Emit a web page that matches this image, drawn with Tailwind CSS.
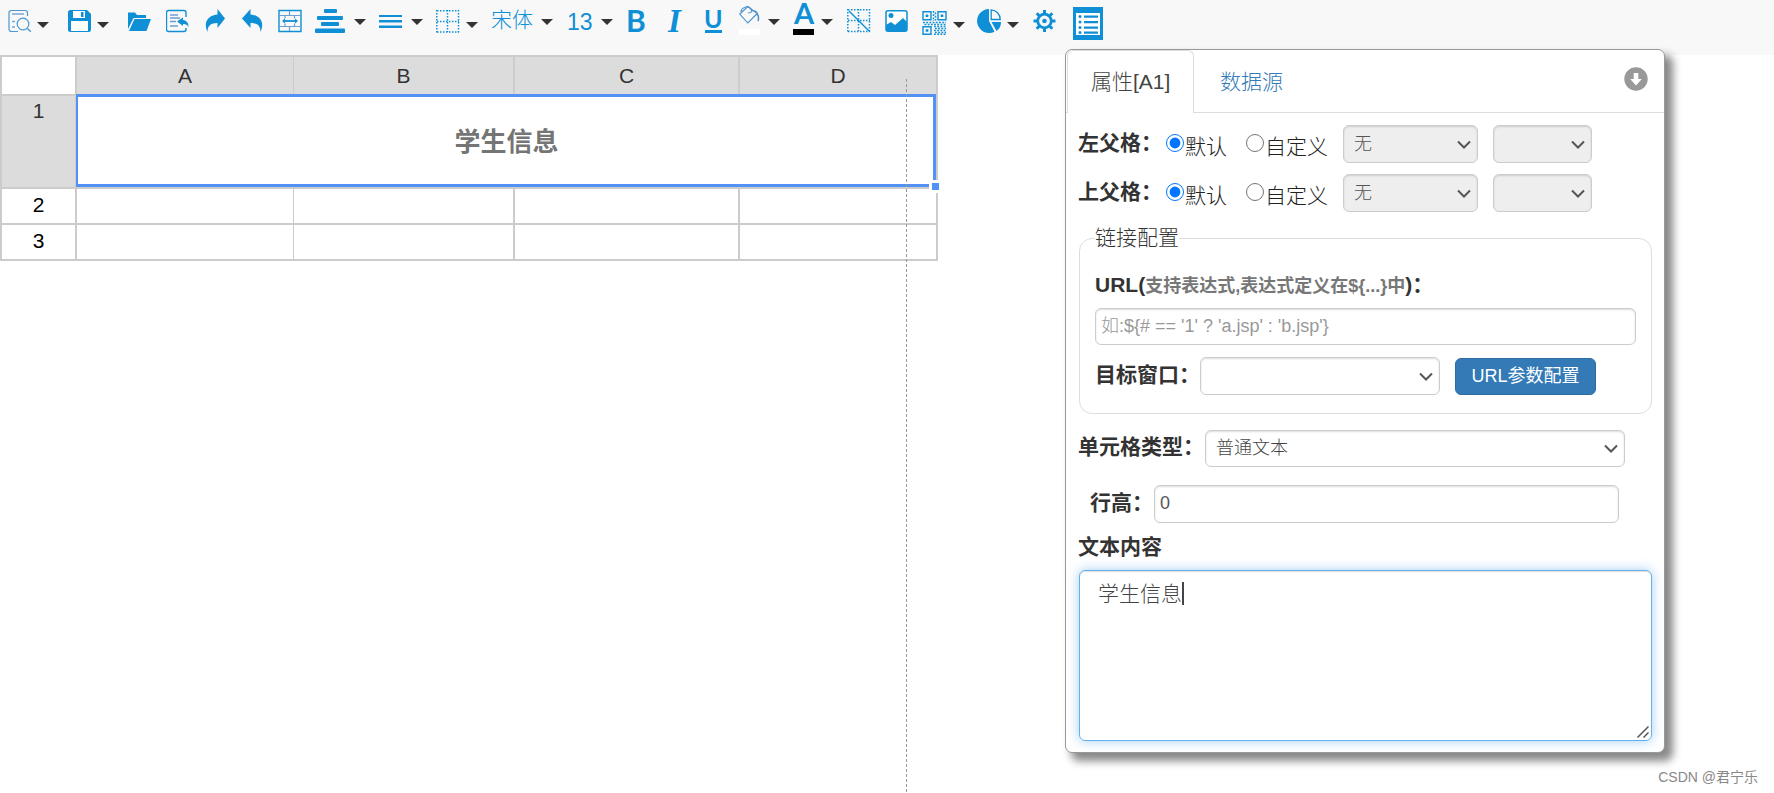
<!DOCTYPE html>
<html lang="zh-CN">
<head>
<meta charset="utf-8">
<title>报表设计器</title>
<script src="https://cdn.jsdelivr.net/npm/@tailwindcss/browser@4"></script>
</head>
<body class="relative flex min-h-screen flex-col bg-white font-['Liberation_Sans','Noto_Sans_CJK_SC',sans-serif] text-[21px] text-[#333]">

<svg class="hidden" aria-hidden="true">
  <symbol id="caret" viewBox="0 0 12 6"><path d="M0 0h12L6 6z" fill="#333"/></symbol>
  <symbol id="chev" viewBox="0 0 14 9"><path d="M1 1.500 7 7.500l6-6" fill="none" stroke="#555" stroke-width="2"/></symbol>
</svg>

<header class="flex h-[55px] items-start bg-[#f8f8f8] pl-2 text-[#0f8fd5]">
  <button aria-label="预览"><svg class="h-[42px] w-[42px]" viewBox="0 0 42 42" fill="none" stroke="currentColor"><path d="M10 31.500H3.500a2.500 2.500 0 0 1-2.500-2.500V13a2.500 2.500 0 0 1 2.500-2.500H17a2.500 2.500 0 0 1 2.500 2.500v3" stroke="#4a97d2" stroke-width="1.200"/><path d="M4 14h12M4 21.500h3M4 27h3" stroke="#7aa7d6" stroke-width="1.400"/><circle cx="15" cy="24" r="5.800" stroke="#4a97d2" stroke-width="1.200"/><path d="m19.500 28.500 3.300 3.300" stroke="#4a97d2" stroke-width="1.400"/><use href="#caret" x="29" y="22" width="12" height="6" stroke="none"/></svg></button>
  <button class="ml-[18px]" aria-label="保存"><svg class="h-[42px] w-[42px]" viewBox="0 0 42 42"><path d="M2.500 10H19l4 4v15.500a2.500 2.500 0 0 1-2.500 2.500h-18A2.500 2.500 0 0 1 0 29.500v-17A2.500 2.500 0 0 1 2.500 10z" fill="currentColor"/><path d="M5 11h12v7H5zM3 21h17v10H3z" fill="#fff"/><path d="M13 12h2.500v5H13z" fill="currentColor"/><use href="#caret" x="29" y="22" width="12" height="6"/></svg></button>
  <button class="ml-[18px]" aria-label="打开"><svg class="h-[42px] w-6" viewBox="0 0 24 42" fill="currentColor"><path d="M0 29V12.500h7l2 2.500h9v3H5.500z"/><path d="M6.500 19H23l-4.500 12H1z"/></svg></button>
  <button class="ml-[14px]" aria-label="导入"><svg class="h-[42px] w-6" viewBox="0 0 24 42" fill="none" stroke="currentColor"><path d="M20 17v-4.500a2 2 0 0 0-2-2H2.500a2 2 0 0 0-2 2v17a2 2 0 0 0 2 2H18a2 2 0 0 0 2-2V28" stroke-width="1.400"/><path d="M4 15h8M4 18h10M4 21.500h6M4 26h8" stroke="#6c9fd3" stroke-width="1.300"/><path d="m11 21.500 6-4v2.500c4 .5 5.500 3 5.500 7-1.500-2.500-3-3.200-5.500-3v2z" fill="currentColor" stroke="none"/></svg></button>
  <button class="ml-[15px]" aria-label="重做"><svg class="h-[42px] w-[22px]" viewBox="0 0 22 42" fill="currentColor"><path d="M20 18.500 12.500 9v5.500C4.500 15-2.500 21 2.500 32c0-6 3-9 10-9v5z"/></svg></button>
  <button class="ml-[15px]" aria-label="撤销"><svg class="h-[42px] w-[22px]" viewBox="0 0 22 42" fill="currentColor"><path d="M0 18.500 8.500 9v5.500C16.500 15 23.500 21 18.500 32c0-6-3-9-10-9v5z"/></svg></button>
  <button class="ml-[14px]" aria-label="合并单元格"><svg class="h-[42px] w-6" viewBox="0 0 24 42" fill="none" stroke="currentColor"><path d="M1 10.500h22v21H1z" stroke-width="1.400"/><path d="M1 15.500h22M1 26.500h22M11.500 11v4.500M11.500 26.500V31M7 15.500v3M16.500 15.500v3M7 23.500v3M16.500 23.500v3" stroke="#6c9fd3" stroke-width="1.200"/><path d="M5 21h14" stroke-width="1.800"/><path d="m4 21 3-2.500v5zM20 21l-3-2.500v5z" fill="currentColor" stroke="none"/></svg></button>
  <button class="ml-[13px]" aria-label="水平对齐"><svg class="h-[42px] w-[51px]" viewBox="0 0 51 42" fill="currentColor"><rect x="9" y="9" width="13" height="4" rx="1"/><rect x="2" y="16" width="26" height="4" rx="1"/><rect x="6" y="22" width="18" height="4" rx="1"/><rect x="0" y="28.500" width="30" height="4.500" rx="1"/><use href="#caret" x="39" y="19" width="12" height="6"/></svg></button>
  <button class="ml-[13px]" aria-label="垂直对齐"><svg class="h-[42px] w-11" viewBox="0 0 44 42" fill="currentColor"><path d="M0 15h23v2H0zM0 20h23v2.500H0zM0 25.500h23V28H0z"/><use href="#caret" x="32" y="19" width="12" height="6"/></svg></button>
  <button class="ml-[13px]" aria-label="边框"><svg class="h-[42px] w-[42px]" viewBox="0 0 42 42" fill="none" stroke="currentColor" stroke-width="1.500" stroke-dasharray="1.500 1.500"><path d="M1 10.800h22M1 32h22M.8 10v22.500M22.500 10v22.500M11.500 10v22M1 21.500h22"/><use href="#caret" x="30" y="22" width="12" height="6" stroke="none"/></svg></button>
  <button class="ml-[13px] flex h-[42px] w-[62px] items-start gap-2 text-[21px] leading-10 font-light">宋体<svg class="mt-[19px] h-[6px] w-3 shrink-0"><use href="#caret"/></svg></button>
  <button class="ml-[14px] flex h-[42px] w-[47px] items-start gap-2 text-[23px] leading-[44px]">13<svg class="mt-[19px] h-[6px] w-3 shrink-0"><use href="#caret"/></svg></button>
  <button class="ml-[13px]" aria-label="加粗"><svg class="h-[42px] w-6 overflow-visible" viewBox="0 0 24 42" fill="currentColor"><text x="-1" y="32" class="font-['Lato'] text-[30px] font-bold">B</text></svg></button>
  <button class="ml-[17px]" aria-label="斜体"><svg class="h-[42px] w-5 overflow-visible" viewBox="0 0 20 42" fill="currentColor"><text x="0" y="32" class="font-['Liberation_Serif'] text-[33px] font-bold italic">I</text></svg></button>
  <button class="ml-[17px]" aria-label="下划线"><svg class="h-[42px] w-5 overflow-visible" viewBox="0 0 20 42" fill="currentColor"><text x="-1" y="28" class="font-['Lato'] text-[25px] font-bold">U</text><path d="M0 30h17v3H0z"/></svg></button>
  <button class="ml-[14px]" aria-label="填充颜色"><svg class="h-[42px] w-[42px]" viewBox="0 0 42 42" fill="none" stroke="#4a90cf"><path d="m.8 14 8-7.500 9.500 7-9.500 9.500z" stroke-width="1.100"/><path d="M2 12c0-4 6-7 9-4s2 5-2 5M13.500 11c4-1 6.500 3 6 10" stroke-width="1.100"/><path d="M17.500 14c2 1 2.500 4 1.500 7" stroke-width="1.300"/><path d="M0 29h21v6H0z" fill="#fff" stroke="none"/><use href="#caret" x="29" y="19" width="12" height="6" stroke="none"/></svg></button>
  <button class="ml-[12px]" aria-label="字体颜色"><svg class="h-[42px] w-[42px] overflow-visible" viewBox="0 0 42 42" fill="currentColor"><text x="1" y="24" class="font-['Lato'] text-[29px] font-bold">A</text><path d="M0 29h21v6H0z" fill="#000"/><use href="#caret" x="28" y="19" width="12" height="6"/></svg></button>
  <button class="ml-[12px]" aria-label="斜线表头"><svg class="h-[42px] w-6" viewBox="0 0 24 42" fill="none" stroke="currentColor" stroke-width="1.500"><path stroke-dasharray="1.500 1.500" d="M1 9.800h22M1 31.500h22M.8 9v22.500M22.500 9v22.500M11.500 9v22M1 20.500h22"/><path d="m2 11 20 20"/></svg></button>
  <button class="ml-[14px]" aria-label="图片"><svg class="h-[42px] w-6" viewBox="0 0 24 42"><rect x="1" y="10.700" width="21" height="20.600" rx="2" fill="#fff" stroke="currentColor" stroke-width="1.500"/><circle cx="6" cy="15.500" r="2.500" fill="currentColor"/><path d="M1 25l5-3 4 3 8-7 4 4v9H1z" fill="currentColor"/></svg></button>
  <button class="ml-[13px]" aria-label="二维码"><svg class="h-[42px] w-[43px]" viewBox="0 0 43 42"><g fill="none" stroke="currentColor" stroke-width="1.400"><path d="M1 11.700h8v8H1zM16 11.700h8v8h-8zM1 26.700h8v7.600H1z"/><path d="M11.500 11v10M13.500 12.500v8M1 22.500h23M2.500 24.500h22M12 26.500h12M13 28.500h11M12 30.500h12M13 32.500h11M12 34.300h12" stroke-dasharray="1.800 1.400" stroke-width="1.500"/></g><path d="M3.700 14.500h2.600v2.600H3.700zM18.700 14.500h2.600v2.600h-2.600zM3.700 29.200h2.600v2.600H3.700z" fill="currentColor"/><use href="#caret" x="31" y="22" width="12" height="6"/></svg></button>
  <button class="ml-[12px]" aria-label="图表"><svg class="h-[42px] w-[43px]" viewBox="0 0 43 42"><path d="M12 21V9a12 12 0 1 0 5.500 22.700z" fill="currentColor"/><path d="M14.200 9.800v9.700h9c0-5.500-4-9.300-9-9.700z" fill="none" stroke="currentColor" stroke-width="1.300"/><path d="M14.500 22H24c0 4-1.500 7-4.500 9z" fill="currentColor"/><use href="#caret" x="30" y="22" width="12" height="6"/></svg></button>
  <button class="ml-[13px]" aria-label="设置"><svg class="h-[42px] w-6" viewBox="0 0 24 42" fill="none" stroke="currentColor"><circle cx="11.500" cy="21" r="6.800" stroke-width="2.800"/><circle cx="11.500" cy="21" r="2.300" fill="currentColor" stroke="none"/><path d="M11.500 10v4M11.500 28v4M.5 21h4M18.500 21h4M3.700 13.200l2.800 2.800M16.500 26l2.800 2.800M19.300 13.200 16.500 16M6.500 26l-2.800 2.800" stroke-width="3"/></svg></button>
  <button class="ml-[16px]" aria-label="属性面板"><svg class="h-[42px] w-[30px]" viewBox="0 0 30 42"><path d="M0 7h30v33H0z" fill="currentColor"/><path d="M3 13h24v22H3z" fill="#fff"/><g fill="currentColor"><path d="M11 15.500h14v2.200H11zM11 21h14v2.200H11zM11 26.500h14v2.200H11zM11 31.500h14v2.200H11z"/><circle cx="7" cy="16.600" r="1.500"/><circle cx="7" cy="22.100" r="1.500"/><circle cx="7" cy="27.600" r="1.500"/><circle cx="7" cy="32.600" r="1.500"/></g></svg></button>
</header>

<main class="relative w-[938px] flex-1">
  <table class="w-full table-fixed border-separate border-spacing-0 border-t-2 border-l-2 border-[#ccc] text-center text-[21px] leading-6">
    <colgroup><col class="w-[75px]"><col class="w-[217px]"><col class="w-[221px]"><col class="w-[225px]"><col></colgroup>
    <thead>
      <tr class="h-[39px] bg-[#dcdcdc]">
        <td class="border-r-2 border-b-2 border-[#ccc] bg-white"></td>
        <th scope="col" class="border-r border-b-2 border-[#ccc] font-normal">A</th>
        <th scope="col" class="border-r-2 border-b-2 border-[#ccc] font-normal">B</th>
        <th scope="col" class="border-r-2 border-b-2 border-[#ccc] font-normal">C</th>
        <th scope="col" class="border-r-2 border-b-2 border-[#ccc] font-normal">D</th>
      </tr>
    </thead>
    <tbody>
      <tr class="h-[93px]">
        <th scope="row" class="border-r-2 border-b-2 border-[#ccc] bg-[#dcdcdc] pt-[3px] align-top font-normal">1</th>
        <td colspan="4" class="relative border-r-2 border-b-2 border-[#ccc] text-[26px] leading-8 font-bold text-[#757575]">学生信息
          <div class="absolute -top-[2px] right-0 bottom-0 -left-px border-3 border-l-2 border-[#5292f7]"></div>
          <div class="absolute -right-[6px] -bottom-[6px] size-[13px] border-3 border-white bg-[#5292f7]"></div>
        </td>
      </tr>
      <tr class="h-9 text-black"><th scope="row" class="border-r-2 border-b-2 border-[#ccc] pb-[2px] font-normal">2</th><td class="border-r border-b-2 border-[#ccc]"></td><td class="border-r-2 border-b-2 border-[#ccc]"></td><td class="border-r-2 border-b-2 border-[#ccc]"></td><td class="border-r-2 border-b-2 border-[#ccc]"></td></tr>
      <tr class="h-9 text-black"><th scope="row" class="border-r-2 border-b-2 border-[#ccc] pb-[2px] font-normal">3</th><td class="border-r border-b-2 border-[#ccc]"></td><td class="border-r-2 border-b-2 border-[#ccc]"></td><td class="border-r-2 border-b-2 border-[#ccc]"></td><td class="border-r-2 border-b-2 border-[#ccc]"></td></tr>
    </tbody>
  </table>
  <div class="absolute top-6 bottom-0 left-[906px] w-px bg-[repeating-linear-gradient(to_bottom,#999_0,#999_3px,transparent_3px,transparent_5px)]"></div>
</main>

<aside class="absolute top-[49px] right-[109px] w-[600px] rounded-[7px] border border-[#999] bg-white shadow-[7px_7px_8px_1px_#888]">
  <nav class="flex h-[63px] border-b border-[#ddd] pl-px font-light">
    <a href="#props" class="-mb-px h-[63px] w-[127px] rounded-t-md border border-b-0 border-[#ddd] bg-white pl-[23px] leading-[62px] text-[#444]">属性[A1]</a>
    <a href="#data" class="pl-[26px] leading-[64px] text-[#337ab7]">数据源</a>
    <button class="mr-4 ml-auto" aria-label="收起"><svg class="mb-1 size-6" viewBox="0 0 24 24"><circle cx="12" cy="12" r="11.700" fill="#999"/><path d="M9.700 6h4.600v6h3.500L12 18.500 6.200 12h3.500z" fill="#fff"/></svg></button>
  </nav>

  <form class="px-3 pt-3 pb-[11px]" onsubmit="return false">
    <div class="flex h-[38px] items-center font-light">
      <span class="pb-[2px] font-bold">左父格：</span>
      <label class="flex items-center"><input type="radio" name="left" checked class="mb-[2px] ml-1 size-[18px]"><span class="pt-[6px] pl-px text-[#222]">默认</span></label>
      <label class="ml-[19px] flex items-center"><input type="radio" name="left" class="mb-[2px] size-[18px]"><span class="pt-[6px] pl-px text-[#222]">自定义</span></label>
      <div class="relative ml-[15px] w-[135px]"><select disabled aria-label="左父格列" class="h-[38px] w-full appearance-none rounded-md border border-[#ccc] bg-[#eee] pl-[10px] text-[18px] text-[#555] opacity-100 shadow-[inset_0_1px_2px_#0002]"><option>无</option></select><svg class="pointer-events-none absolute top-[15px] right-[7px] h-[9px] w-[14px]"><use href="#chev"/></svg></div>
      <div class="relative ml-[15px] w-[99px]"><select disabled aria-label="左父格行" class="h-[38px] w-full appearance-none rounded-md border border-[#ccc] bg-[#eee] pl-[10px] text-[18px] text-[#555] opacity-100 shadow-[inset_0_1px_2px_#0002]"><option></option></select><svg class="pointer-events-none absolute top-[15px] right-[7px] h-[9px] w-[14px]"><use href="#chev"/></svg></div>
    </div>
    <div class="mt-[11px] flex h-[38px] items-center font-light">
      <span class="pb-[2px] font-bold">上父格：</span>
      <label class="flex items-center"><input type="radio" name="top" checked class="mb-[2px] ml-1 size-[18px]"><span class="pt-[6px] pl-px text-[#222]">默认</span></label>
      <label class="ml-[19px] flex items-center"><input type="radio" name="top" class="mb-[2px] size-[18px]"><span class="pt-[6px] pl-px text-[#222]">自定义</span></label>
      <div class="relative ml-[15px] w-[135px]"><select disabled aria-label="上父格列" class="h-[38px] w-full appearance-none rounded-md border border-[#ccc] bg-[#eee] pl-[10px] text-[18px] text-[#555] opacity-100 shadow-[inset_0_1px_2px_#0002]"><option>无</option></select><svg class="pointer-events-none absolute top-[15px] right-[7px] h-[9px] w-[14px]"><use href="#chev"/></svg></div>
      <div class="relative ml-[15px] w-[99px]"><select disabled aria-label="上父格行" class="h-[38px] w-full appearance-none rounded-md border border-[#ccc] bg-[#eee] pl-[10px] text-[18px] text-[#555] opacity-100 shadow-[inset_0_1px_2px_#0002]"><option></option></select><svg class="pointer-events-none absolute top-[15px] right-[7px] h-[9px] w-[14px]"><use href="#chev"/></svg></div>
    </div>

    <fieldset class="mt-[11px] ml-px rounded-[13px] border border-[#ddd] px-[15px] pb-[18px]">
      <legend class="leading-[30px] font-light">链接配置</legend>
      <label for="url" class="mt-5 block h-6 leading-6 font-bold">URL(<span class="text-[18px] text-[#777]">支持表达式,表达式定义在${...}中</span>)：</label>
      <input id="url" type="text" placeholder="如:${# == '1' ? 'a.jsp' : 'b.jsp'}" class="mt-[11px] block h-[37px] w-full rounded-md border border-[#ccc] pl-[5px] text-[18px] font-light shadow-[inset_0_1px_2px_#0002] placeholder:text-[#999]">
      <div class="mt-3 flex h-[38px] items-center">
        <label for="target" class="pb-[2px] font-bold">目标窗口：</label>
        <div class="relative w-[240px]"><select id="target" class="block h-[38px] w-full appearance-none rounded-md border border-[#ccc] bg-white text-[18px] shadow-[inset_0_1px_2px_#0002]"><option></option></select><svg class="pointer-events-none absolute top-[15px] right-[7px] h-[9px] w-[14px]"><use href="#chev"/></svg></div>
        <button class="ml-[15px] h-[37px] w-[141px] rounded-md border border-[#2e6da4] bg-[#337ab7] text-[18px] text-white">URL参数配置</button>
      </div>
    </fieldset>

    <div class="mt-[15px] flex h-[38px] items-center">
      <label for="type" class="pb-[2px] font-bold">单元格类型：</label>
      <div class="relative ml-px w-[420px]"><select id="type" class="block h-[37px] w-full appearance-none rounded-md border border-[#ccc] bg-white pl-[10px] text-[18px] font-light text-[#444] shadow-[inset_0_1px_2px_#0002]"><option>普通文本</option></select><svg class="pointer-events-none absolute top-[14px] right-[7px] h-[9px] w-[14px]"><use href="#chev"/></svg></div>
    </div>
    <div class="mt-[18px] ml-3 flex h-[38px] items-center">
      <label for="lh" class="pb-[2px] font-bold">行高：</label>
      <input id="lh" type="text" value="0" class="ml-px h-[38px] w-[465px] rounded-md border border-[#ccc] pb-[2px] pl-[5px] text-[18px] text-[#555] shadow-[inset_0_1px_2px_#0002]">
    </div>
    <label for="content" class="mt-3 block h-6 leading-6 font-bold">文本内容</label>
    <div class="relative mt-[11px] ml-px">
      <textarea id="content" class="block h-[171px] w-full resize-none rounded-md border border-[#66afe9] py-2 pl-[18px] leading-[30px] font-light text-[#444] shadow-[inset_0_1px_1px_#0002,0_0_12px_#66afe999]">学生信息</textarea>
      <div class="absolute top-3 left-[103px] h-[23px] w-[2px] bg-[#444]"></div>
      <svg class="absolute right-[3px] bottom-[3px] size-3" viewBox="0 0 12 12" fill="none" stroke="#555" stroke-width="1.500"><path d="M.5 11.500 11.500.5M6.500 11.500l5-5"/></svg>
    </div>
  </form>
</aside>

<footer class="absolute right-4 bottom-[6px] text-[14px] leading-5 text-[#888]">CSDN @君宁乐</footer>
</body>
</html>
